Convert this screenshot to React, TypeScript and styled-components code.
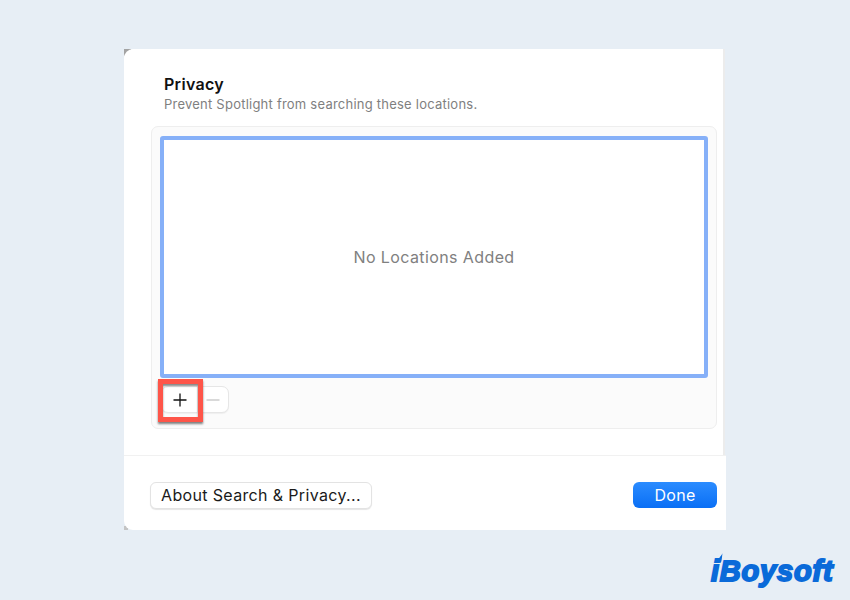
import React from "react";
import styled, { createGlobalStyle } from "styled-components";

const Global = createGlobalStyle`
  html, body { margin: 0; padding: 0; background: #e7eef5; }
  body { font-family: Inter, "Liberation Sans", sans-serif; }
`;

const Page = styled.div`
  width: 850px;
  height: 600px;
  box-sizing: border-box;
  padding: 49px 0 0 124px;
  background: #e7eef5;
  position: relative;
  overflow: hidden;
`;

const Dialog = styled.div`
  width: 602px;
  height: 481px;
  position: relative;
  display: flex;
  flex-direction: column;
  &::before, &::after {
    content: "";
    position: absolute;
    left: 0;
    background: #a3a3a3;
  }
  &::before { top: 0; width: 7px; height: 7px; }
  &::after { bottom: 0; width: 4px; height: 4px; background: #c4c4c4; }
`;

const Body = styled.div`
  width: 601px;
  height: 406px;
  box-sizing: border-box;
  position: relative;
  z-index: 1;
  background: #fff;
  border-right: 2px solid #ececec;
  border-top-left-radius: 9px;
  padding: 26px 6px 0 27px;
  display: flex;
  flex-direction: column;
`;

const Title = styled.h2`
  margin: 0 0 0 13px;
  font-size: 16px;
  line-height: 18px;
  font-weight: 600;
  letter-spacing: 0.3px;
  color: #111;
`;

const Subtitle = styled.p`
  margin: 3px 0 0 13px;
  font-size: 13px;
  line-height: 17px;
  font-weight: 400;
  letter-spacing: 0.23px;
  color: #7f7f7f;
`;

const Panel = styled.div`
  margin-top: 13px;
  height: 303px;
  box-sizing: border-box;
  background: #fbfbfb;
  border: 1px solid #eeeeee;
  border-radius: 7px;
  padding: 9px 8px 0 8px;
  display: flex;
  flex-direction: column;
`;

const ListBox = styled.div`
  height: 242px;
  box-sizing: border-box;
  background: #fff;
  border: 4px solid #86b0f8;
  border-radius: 3px;
  display: flex;
  align-items: center;
  justify-content: center;
  font-size: 16px;
  letter-spacing: 0.4px;
  color: #808080;
`;

const Stepper = styled.div`
  position: relative;
  margin: 8px 0 0 1px;
  width: 68px;
  height: 27px;
  display: flex;
  box-sizing: border-box;
  background: #fff;
  border: 1px solid #e6e6e6;
  border-radius: 7px;
  box-shadow: 0 1px 1px rgba(0, 0, 0, 0.05);
`;

const StepButton = styled.div<{ $muted?: boolean }>`
  width: ${(p) => (p.$muted ? 30 : 36)}px;
  display: flex;
  align-items: center;
  justify-content: center;
  color: ${(p) => (p.$muted ? "#c4c4c4" : "#111")};
  border-right: ${(p) => (p.$muted ? "none" : "1px solid #e4e4e4")};
`;

const Highlight = styled.div`
  position: absolute;
  left: -4px;
  top: -8px;
  width: 45px;
  height: 43px;
  box-sizing: border-box;
  border: 5px solid #fe5549;
  box-shadow: 0 2px 2px rgba(60, 60, 60, 0.65), inset 0 2px 2px rgba(60, 60, 60, 0.6);
`;

const Footer = styled.div`
  flex: 1;
  box-sizing: border-box;
  position: relative;
  z-index: 1;
  background: #fff;
  border-top: 1px solid #f1f1f1;
  border-bottom-left-radius: 9px;
  padding: 26px 9px 0 26px;
  display: flex;
  align-items: flex-start;
  justify-content: space-between;
`;

const SecondaryButton = styled.div`
  width: 222px;
  height: 27px;
  box-sizing: border-box;
  padding-bottom: 2px;
  background: #fff;
  border: 1px solid #e3e3e3;
  border-radius: 6px;
  box-shadow: 0 1px 1px rgba(0, 0, 0, 0.1);
  display: flex;
  align-items: center;
  justify-content: center;
  font-size: 16px;
  letter-spacing: 0.35px;
  color: #1a1a1a;
`;

const PrimaryButton = styled.div`
  width: 84px;
  height: 26px;
  border-radius: 6px;
  background: linear-gradient(#2b8cff, #0a6ff5);
  display: flex;
  align-items: center;
  justify-content: center;
  font-size: 16px;
  font-weight: 400;
  letter-spacing: 0.3px;
  color: #fff;
`;

const Logo = styled.div`
  position: absolute;
  left: 711px;
  top: 552px;
  width: 130px;
  height: 36px;
  color: #0a6ad9;
`;

const LogoText = styled.span`
  position: absolute;
  left: 0;
  top: 3px;
  font-family: "Liberation Sans", Arial, sans-serif;
  font-style: italic;
  font-weight: 700;
  font-size: 29px;
  line-height: 32px;
  letter-spacing: 0.8px;
  -webkit-text-stroke: 1.9px #0a6ad9;
`;

const Drop = styled.svg`
  position: absolute;
  left: 6px;
  top: 1px;
`;

export default function App() {
  return (
    <Page>
      <Global />
      <Dialog>
        <Body>
          <Title>Privacy</Title>
          <Subtitle>Prevent Spotlight from searching these locations.</Subtitle>
          <Panel>
            <ListBox>No Locations Added</ListBox>
            <Stepper>
              <StepButton>
                <svg width="14" height="14" viewBox="0 0 14 14">
                  <path d="M7 0.5V13.5M0.5 7H13.5" stroke="currentColor" strokeWidth="1.3" fill="none" />
                </svg>
              </StepButton>
              <StepButton $muted>
                <svg width="14" height="14" viewBox="0 0 14 14">
                  <path d="M0.5 7H13.5" stroke="currentColor" strokeWidth="1.3" fill="none" />
                </svg>
              </StepButton>
              <Highlight />
            </Stepper>
          </Panel>
        </Body>
        <Footer>
          <SecondaryButton>About Search &amp; Privacy...</SecondaryButton>
          <PrimaryButton>Done</PrimaryButton>
        </Footer>
      </Dialog>
      <Logo>
        <Drop width="8" height="10" viewBox="0 0 8 10">
          <path d="M5.5 0C5 2.5 1.5 4.5 1.5 7.5C1.5 9 2.6 10 4 9.6C5 6.5 5 3.5 5.5 0Z" fill="currentColor" />
        </Drop>
        <LogoText>iBoysoft</LogoText>
      </Logo>
    </Page>
  );
}
